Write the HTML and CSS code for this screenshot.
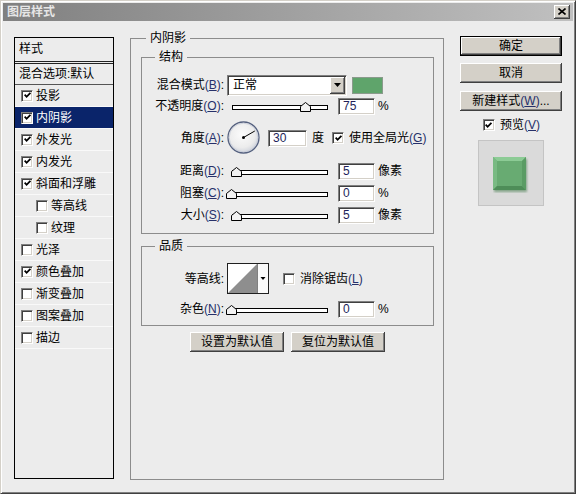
FILE: index.html
```html
<!DOCTYPE html>
<html>
<head>
<meta charset="utf-8">
<link rel="stylesheet" href="styles.css">
</head>
<body>
<div class="win">
  <div class="title">
    <span class="title-text">图层样式</span>
    <span class="close"><svg width="8" height="7" viewBox="0 0 8 7"><path d="M0.5 0.5 L7.5 6.5 M7.5 0.5 L0.5 6.5" stroke="#000" stroke-width="1.6"/></svg></span>
  </div>
  <div class="content">
    <div class="list">
      <div class="list-head">样式</div>
      <div class="list-blend">混合选项:默认</div>
      <div class="item"><span class="cb"><svg class="chk" viewBox="0 0 7 7"><path d="M0.6 2.6 L2.6 4.8 L6.4 0.8" fill="none" stroke="#000" stroke-width="1.8"/></svg></span>投影</div>
      <div class="item sel-item"><span class="cb"><svg class="chk" viewBox="0 0 7 7"><path d="M0.6 2.6 L2.6 4.8 L6.4 0.8" fill="none" stroke="#000" stroke-width="1.8"/></svg></span>内阴影</div>
      <div class="item"><span class="cb"><svg class="chk" viewBox="0 0 7 7"><path d="M0.6 2.6 L2.6 4.8 L6.4 0.8" fill="none" stroke="#000" stroke-width="1.8"/></svg></span>外发光</div>
      <div class="item"><span class="cb"><svg class="chk" viewBox="0 0 7 7"><path d="M0.6 2.6 L2.6 4.8 L6.4 0.8" fill="none" stroke="#000" stroke-width="1.8"/></svg></span>内发光</div>
      <div class="item"><span class="cb"><svg class="chk" viewBox="0 0 7 7"><path d="M0.6 2.6 L2.6 4.8 L6.4 0.8" fill="none" stroke="#000" stroke-width="1.8"/></svg></span>斜面和浮雕</div>
      <div class="item sub"><span class="cb"></span>等高线</div>
      <div class="item sub"><span class="cb"></span>纹理</div>
      <div class="item"><span class="cb"></span>光泽</div>
      <div class="item"><span class="cb"><svg class="chk" viewBox="0 0 7 7"><path d="M0.6 2.6 L2.6 4.8 L6.4 0.8" fill="none" stroke="#000" stroke-width="1.8"/></svg></span>颜色叠加</div>
      <div class="item"><span class="cb"></span>渐变叠加</div>
      <div class="item"><span class="cb"></span>图案叠加</div>
      <div class="item"><span class="cb"></span>描边</div>
    </div>

    <fieldset class="grp outer">
      <legend>内阴影</legend>
      <fieldset class="grp struct">
        <legend>结构</legend>
        <div class="row r-blend">
          <span class="lbl">混合模式<span class="mn">(<u>B</u>)</span>:</span>
          <div class="select"><span class="select-text">正常</span><span class="drop"><svg width="7" height="4" viewBox="0 0 7 4"><path d="M0 0 H7 L3.5 4 Z" fill="#000"/></svg></span></div>
          <span class="swatch"></span>
        </div>
        <div class="row r-s">
          <span class="lbl">不透明度<span class="mn">(<u>O</u>)</span>:</span>
          <div class="sld"><div class="track"></div><svg class="thumb" style="left:73px" width="11" height="10" viewBox="0 0 11 10"><path d="M0.5 9.5 V4.5 L5.5 0.5 L10.5 4.5 V9.5 Z" fill="#f2f2f2" stroke="#000"/></svg></div>
          <span class="num">75</span><span class="unit">%</span>
        </div>
        <div class="row r-angle">
          <span class="lbl">角度<span class="mn">(<u>A</u>)</span>:</span>
          <svg class="dial" width="34" height="34" viewBox="0 0 34 34">
            <defs><radialGradient id="dg" cx="0.45" cy="0.4" r="0.6"><stop offset="0" stop-color="#fbfbfb"/><stop offset="0.7" stop-color="#ececec"/><stop offset="1" stop-color="#cfd3dc"/></radialGradient></defs>
            <circle cx="16.5" cy="16.5" r="15.5" fill="url(#dg)" stroke="#55617f" stroke-width="1.3"/>
            <circle cx="16.5" cy="16.5" r="14.3" fill="none" stroke="#c6cbd8" stroke-width="0.8"/>
            <line x1="16.5" y1="16.5" x2="27.8" y2="10" stroke="#000" stroke-width="1"/>
            <circle cx="16.5" cy="16.5" r="1.5" fill="#000"/>
          </svg>
          <span class="num num-angle">30</span><span class="unit unit-deg">度</span>
          <span class="cb cb-global"><svg class="chk" viewBox="0 0 7 7"><path d="M0.6 2.6 L2.6 4.8 L6.4 0.8" fill="none" stroke="#000" stroke-width="1.8"/></svg></span>
          <span class="cb-text">使用全局光<span class="mn">(<u>G</u>)</span></span>
        </div>
        <div class="row r-s r-first">
          <span class="lbl">距离<span class="mn">(<u>D</u>)</span>:</span>
          <div class="sld"><div class="track"></div><svg class="thumb" style="left:4px" width="11" height="10" viewBox="0 0 11 10"><path d="M0.5 9.5 V4.5 L5.5 0.5 L10.5 4.5 V9.5 Z" fill="#f2f2f2" stroke="#000"/></svg></div>
          <span class="num">5</span><span class="unit">像素</span>
        </div>
        <div class="row r-s">
          <span class="lbl">阻塞<span class="mn">(<u>C</u>)</span>:</span>
          <div class="sld"><div class="track"></div><svg class="thumb" style="left:-1px" width="11" height="10" viewBox="0 0 11 10"><path d="M0.5 9.5 V4.5 L5.5 0.5 L10.5 4.5 V9.5 Z" fill="#f2f2f2" stroke="#000"/></svg></div>
          <span class="num">0</span><span class="unit">%</span>
        </div>
        <div class="row r-s">
          <span class="lbl">大小<span class="mn">(<u>S</u>)</span>:</span>
          <div class="sld"><div class="track"></div><svg class="thumb" style="left:4px" width="11" height="10" viewBox="0 0 11 10"><path d="M0.5 9.5 V4.5 L5.5 0.5 L10.5 4.5 V9.5 Z" fill="#f2f2f2" stroke="#000"/></svg></div>
          <span class="num">5</span><span class="unit">像素</span>
        </div>
      </fieldset>

      <fieldset class="grp quality">
        <legend>品质</legend>
        <div class="row r-contour">
          <span class="lbl">等高线:</span>
          <svg class="contour" width="42" height="31" viewBox="0 0 42 31">
            <rect x="0.5" y="0.5" width="41" height="30" fill="#fafafa" stroke="#202020"/>
            <rect x="1" y="1" width="29" height="29" fill="#fff"/>
            <path d="M1 30 L30 1 V30 Z" fill="#8e8e8e"/>
            <line x1="30.5" y1="1" x2="30.5" y2="30" stroke="#808080"/>
            <path d="M33.5 14 H38.5 L36 17 Z" fill="#000"/>
          </svg>
          <span class="cb cb-aa"></span>
          <span class="cb-text">消除锯齿<span class="mn">(<u>L</u>)</span></span>
        </div>
        <div class="row r-s r-noise">
          <span class="lbl">杂色<span class="mn">(<u>N</u>)</span>:</span>
          <div class="sld"><div class="track"></div><svg class="thumb" style="left:-1px" width="11" height="10" viewBox="0 0 11 10"><path d="M0.5 9.5 V4.5 L5.5 0.5 L10.5 4.5 V9.5 Z" fill="#f2f2f2" stroke="#000"/></svg></div>
          <span class="num">0</span><span class="unit">%</span>
        </div>
      </fieldset>

      <div class="btns">
        <div class="btn wide">设置为默认值</div>
        <div class="btn wide">复位为默认值</div>
      </div>
    </fieldset>

    <div class="side">
      <div class="btn def">确定</div>
      <div class="btn b2">取消</div>
      <div class="btn b3">新建样式<span class="mn">(<u>W</u>)</span>...</div>
      <div class="preview-row"><span class="cb"><svg class="chk" viewBox="0 0 7 7"><path d="M0.6 2.6 L2.6 4.8 L6.4 0.8" fill="none" stroke="#000" stroke-width="1.8"/></svg></span><span class="cb-text">预览<span class="mn">(<u>V</u>)</span></span></div>
      <div class="preview">
        <svg width="36" height="36" viewBox="0 0 36 36">
          <defs><filter id="bl" x="-0.3" y="-0.3" width="1.6" height="1.6"><feGaussianBlur stdDeviation="1.2"/></filter></defs>
          <rect x="1" y="2" width="33" height="33" fill="#3f7a47" opacity="0.55" filter="url(#bl)"/>
          <rect x="0" y="0" width="33" height="33" fill="#6aad74"/>
          <path d="M0 0 H33 L29 4 H4 Z" fill="#8ccb95"/>
          <path d="M0 0 L4 4 V29 L0 33 Z" fill="#79ba83"/>
          <path d="M33 0 V33 L29 29 V4 Z" fill="#5a9c64"/>
          <path d="M0 33 H33 L29 29 H4 Z" fill="#4e8d58"/>
          <rect x="4" y="4" width="25" height="25" fill="#68ab72"/>
        </svg>
      </div>
    </div>
  </div>
</div>
</body>
</html>
```

FILE: styles.css
```css
* { box-sizing: border-box; }
html, body { margin: 0; padding: 0; }
body {
  width: 576px; height: 494px; overflow: hidden;
  font-family: "Liberation Sans", "Noto Sans CJK SC", sans-serif;
  font-size: 12px; color: #000; background: #ececec;
}
.win {
  width: 576px; height: 494px;
  display: flex; flex-direction: column;
  background: #ececec;
  border: 1px solid; border-color: #d4d0c8 #404040 #404040 #d4d0c8;
  box-shadow: inset 1px 1px 0 #fff, inset -1px -1px 0 #808080;
  padding: 2px;
}
.title {
  height: 18px; flex-shrink: 0;
  background: linear-gradient(to right, #808080, #c0c0c0);
  display: flex; align-items: center; justify-content: space-between;
  padding: 0 3px 0 4px;
}
.title-text { color: #e6e6e6; font-weight: bold; font-size: 12px; line-height: 14px; }
.close {
  width: 16px; height: 14px; background: #d4d0c8;
  box-shadow: inset -1px -1px 0 #404040, inset 1px 1px 0 #fff, inset -2px -2px 0 #808080;
  display: flex; align-items: center; justify-content: center; padding-bottom: 1px;
}
.close svg { display: block; }

.content { flex: 1; display: flex; align-items: flex-start; padding-left: 11px; }

/* left list */
.list {
  width: 100px; height: 442px; margin-top: 16px;
  border: 1px solid #000; background: #ececec;
  display: flex; flex-direction: column;
}
.list-head {
  height: 26px; border-bottom: 3px double #222;
  padding-left: 4px; line-height: 22px;
}
.list-blend {
  height: 21px; border-bottom: 1px solid #555;
  padding-left: 4px; line-height: 20px;
}
.item {
  height: 22px; border-bottom: 1px solid #f9f9f9;
  display: flex; align-items: center; padding-left: 6px; gap: 3px;
  line-height: 14px;
}
.item.sub { padding-left: 21px; }
.sel-item { background: #0a246a; color: #fff; }

/* checkboxes */
.cb {
  width: 12px; height: 12px; flex-shrink: 0; background: #fff;
  border: 1px solid; border-color: #808080 #fff #fff #808080;
  box-shadow: inset 1px 1px 0 #404040, inset -1px -1px 0 #d4d0c8;
  display: flex; align-items: center; justify-content: center;
}
.chk { width: 7px; height: 7px; display: block; }

/* groups */
.grp {
  margin: 0; border: 1px solid #8c8c8c;
  min-width: 0;
}
.grp legend {
  padding: 0 4px; line-height: 14px; background: #ececec;
}
.outer {
  margin: 10px 0 0 16px; width: 314px; height: 449px;
  padding: 0 9px 0 10px;
}
.outer > legend { margin-left: 5px; }
.struct { margin-top: 5px; padding: 0 0 7px 0; }
.struct > legend, .quality > legend { margin-left: 13px; }
.quality { margin-top: 5px; padding: 0 0 6px 0; }

.row { display: flex; align-items: center; }
.lbl { width: 82px; flex-shrink: 0; text-align: right; margin-right: 3px; white-space: nowrap; line-height: 14px; }
.mn { color: #26306a; }
.mn u { text-decoration-thickness: 1px; text-underline-offset: 1px; }

.r-blend { margin-top: 10px; height: 22px; }
.r-s { height: 22px; }
.r-blend + .r-s { height: 20px; }
.r-angle { margin-top: 5px; height: 34px; }
.r-first { margin-top: 5px; }

.select {
  width: 120px; height: 21px; background: #fff;
  border: 1px solid; border-color: #808080 #fff #fff #808080;
  box-shadow: inset 1px 1px 0 #404040, inset -1px -1px 0 #d4d0c8;
  display: flex; align-items: center; justify-content: space-between;
  padding: 1px;
}
.select-text { padding-left: 4px; line-height: 14px; }
.drop {
  width: 15px; height: 17px; background: #d4d0c8;
  box-shadow: inset -1px -1px 0 #404040, inset 1px 1px 0 #fff, inset -2px -2px 0 #808080;
  display: flex; align-items: center; justify-content: center;
}
.drop svg { display: block; }
.swatch {
  width: 31px; height: 17px; margin-left: 5px;
  background: #5fa46b; border: 1px solid #8a9a8c;
}

.sld { position: relative; width: 107px; height: 20px; flex-shrink: 0; }
.track {
  margin: 9px 0 0 5px; width: 96px; height: 5px;
  border: 1px solid #000; background: #fff;
}
.thumb { position: absolute; top: 6px; display: block; }

.num {
  width: 37px; height: 17px; margin-left: 4px; flex-shrink: 0;
  background: #fff;
  border: 1px solid; border-color: #808080 #fff #fff #808080;
  box-shadow: inset 1px 1px 0 #404040, inset -1px -1px 0 #d4d0c8;
  padding-left: 4px; line-height: 15px; color: #231f5a;
}
.unit { margin-left: 3px; line-height: 14px; }

.dial { display: block; flex-shrink: 0; }
.num-angle { width: 39px; margin-left: 7px; }
.unit-deg { margin-left: 5px; }
.cb-global { margin-left: 8px; }
.cb-text { margin-left: 5px; line-height: 14px; white-space: nowrap; }

.r-contour { margin-top: 10px; height: 31px; }
.contour { display: block; flex-shrink: 0; }
.cb-aa { margin-left: 14px; }
.r-noise { margin-top: 5px; height: 20px; }

.btns { display: flex; justify-content: center; gap: 7px; margin-top: 6px; }
.btn {
  height: 20px; background: #d4d0c8;
  box-shadow: inset -1px -1px 0 #404040, inset 1px 1px 0 #fff, inset -2px -2px 0 #808080;
  display: flex; align-items: center; justify-content: center;
  line-height: 14px; white-space: nowrap;
}
.btn.wide { width: 94px; }

.side {
  margin: 15px 0 0 16px; width: 102px;
  display: flex; flex-direction: column; align-items: center;
}
.side .btn { width: 102px; }
.btn.def {
  border: 1px solid #000;
  box-shadow: inset -1px -1px 0 #404040, inset 1px 1px 0 #fff, inset -2px -2px 0 #808080;
}
.btn.b2 { margin-top: 7px; }
.btn.b3 { margin-top: 8px; }
.preview-row { margin-top: 4px; height: 20px; display: flex; align-items: center; padding-left: 1px; }
.preview {
  margin-top: 5px; width: 66px; height: 66px;
  background: #dadada; border: 1px solid #c4c4c4;
  padding: 16px 0 0 14px;
}
.preview svg { display: block; }
```
